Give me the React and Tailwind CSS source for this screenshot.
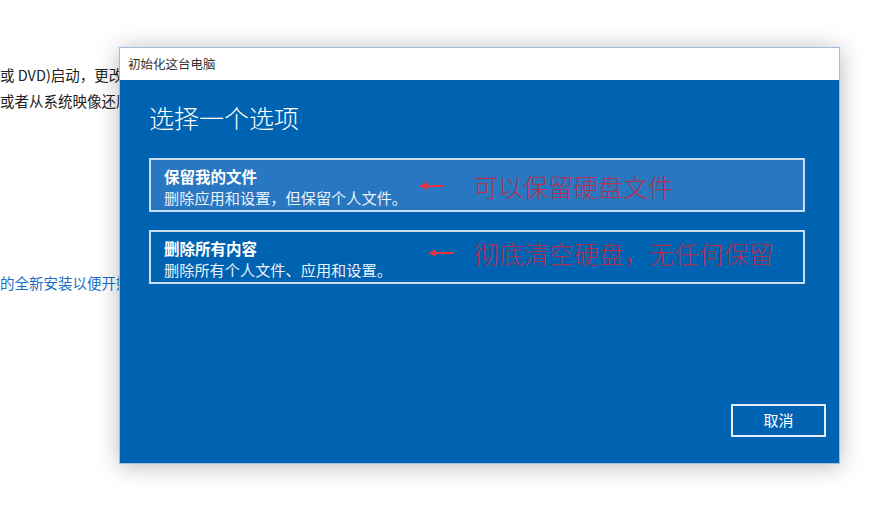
import React from "react";

const CJK = { fontFamily: '"Noto Sans CJK SC", "Noto Sans", sans-serif' };

function RedArrow({ width = 24 }) {
  return (
    <svg width={width} height="10" viewBox={`0 0 ${width} 10`} className="shrink-0">
      <line x1="6" y1="5" x2={width} y2="5" stroke="#e8323c" strokeWidth="2" />
      <path d="M0 5 L8 1.2 L8 8.8 Z" fill="#e8323c" />
    </svg>
  );
}

function OptionCard({ title, desc, selected = false }) {
  return (
    <div
      className={`h-[54px] w-[656px] border-2 border-[#c6def3] px-[13px] pt-[6px] text-white ${
        selected ? "bg-[#2a77c1]" : "bg-[#0063b1]"
      }`}
    >
      <div className="text-[15.5px] font-bold leading-[21px]">{title}</div>
      <div className="text-[15.2px] leading-[21px] text-[#eaf2fa]">{desc}</div>
    </div>
  );
}

export default function App() {
  return (
    <div className="relative h-[512px] w-[884px] overflow-hidden bg-white" style={CJK}>
      {/* page behind the dialog, cut off where the dialog starts */}
      <div className="w-[119px] overflow-hidden pt-[64px] text-[14.5px] text-[#222]">
        <div className="whitespace-nowrap leading-[21px]">或 DVD)启动，更改 Windows 启动设置，</div>
        <div className="mt-[5px] whitespace-nowrap leading-[21px]">或者从系统映像还原 Windows。</div>
        <div className="mt-[161px] whitespace-nowrap leading-[21px] text-[#1a6fc4]">
          的全新安装以便开始使用
        </div>
      </div>

      {/* dialog */}
      <div className="absolute left-[119px] top-[47px] flex h-[417px] w-[721px] flex-col border border-[#9dbddc] shadow-[0_2px_22px_rgba(0,0,0,0.28)]">
        <div className="flex h-[32px] items-center bg-white pl-[8px] text-[12.5px] text-[#333]">
          初始化这台电脑
        </div>
        <div className="relative flex flex-1 flex-col bg-[#0063b1] pl-[29px] pr-[13px] pb-[26px] pt-[21px]">
          <h1 className="text-[25px] font-light leading-[32px] text-white">选择一个选项</h1>
          <div className="mt-[25px] flex flex-col gap-[18px]">
            <OptionCard title="保留我的文件" desc="删除应用和设置，但保留个人文件。" selected />
            <OptionCard title="删除所有内容" desc="删除所有个人文件、应用和设置。" />
          </div>
          <div className="flex-1" />
          <div className="flex justify-end">
            <button className="h-[33px] w-[95px] border-2 border-[#e4edf6] text-[15px] text-white">
              取消
            </button>
          </div>

          {/* red annotations */}
          <div className="absolute left-[299px] top-[91px] flex items-center">
            <RedArrow width={25} />
            <span className="ml-[29px] text-[25px] font-light leading-[30px] text-[#c02a44]/90">
              可以保留硬盘文件
            </span>
          </div>
          <div className="absolute left-[308px] top-[158px] flex items-center">
            <RedArrow width={26} />
            <span className="ml-[20px] text-[25px] font-light leading-[30px] text-[#c02a44]/90">
              彻底清空硬盘，无任何保留
            </span>
          </div>
        </div>
      </div>
    </div>
  );
}
